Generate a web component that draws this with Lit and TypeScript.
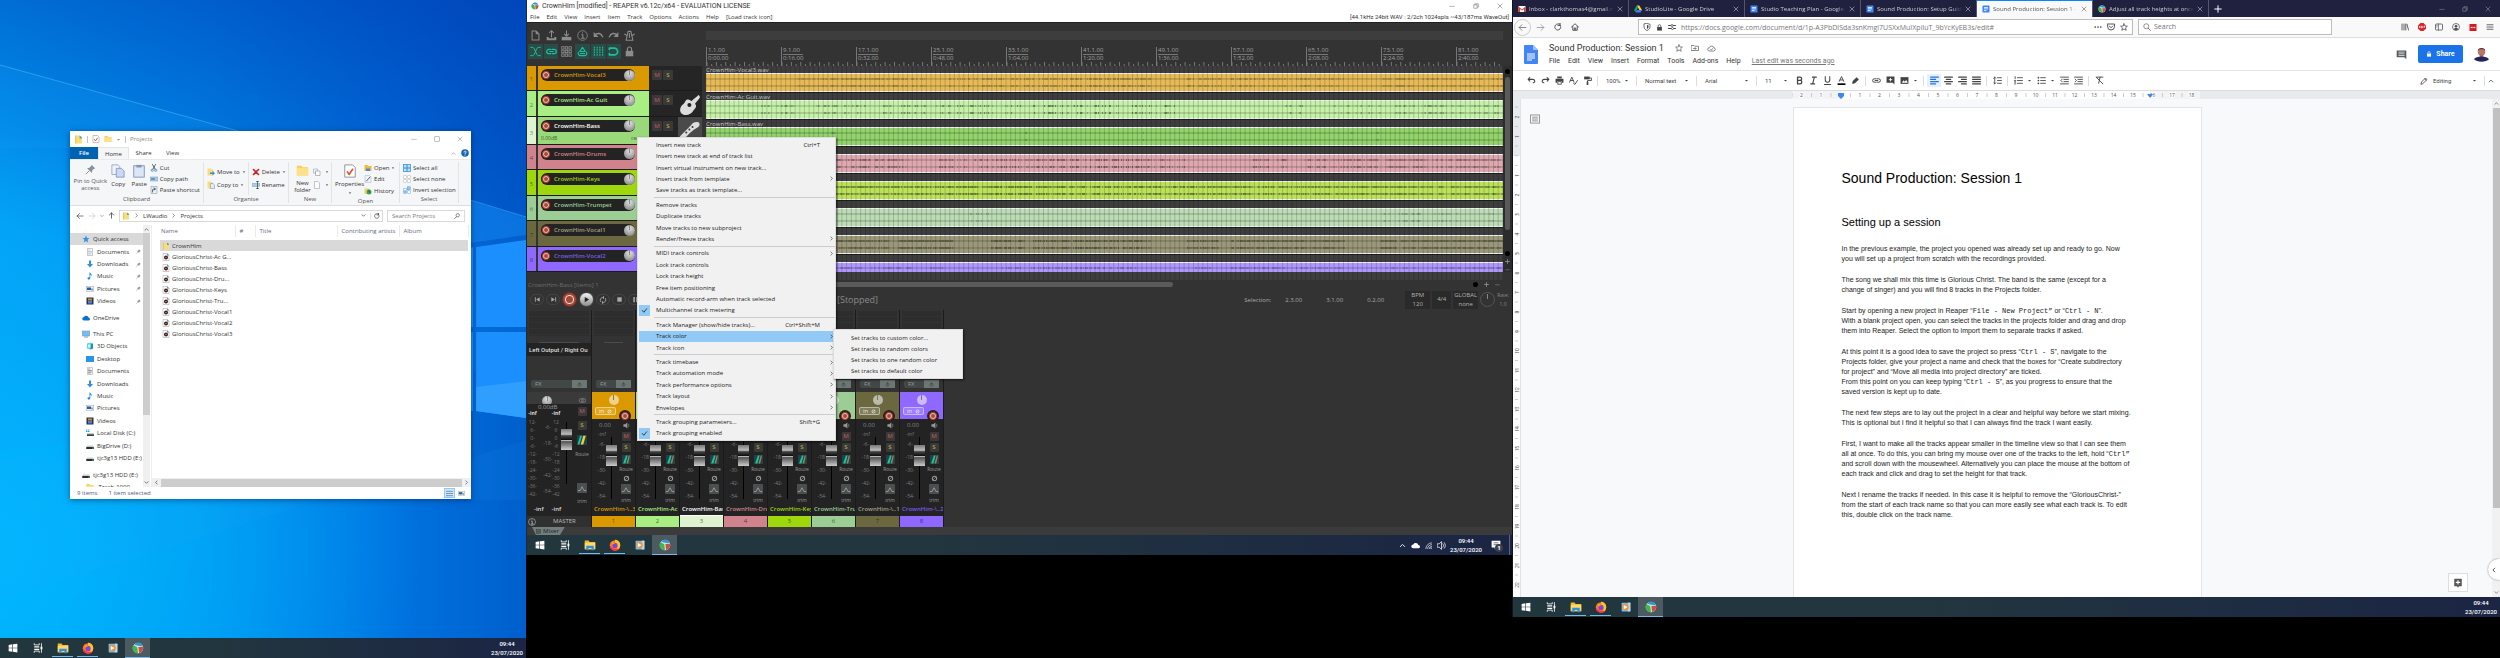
import { LitElement, html, svg, css, nothing } from "lit";
import { customElement, property } from "lit/decorators.js";
import { styleMap } from "lit/directives/style-map.js";
import { classMap } from "lit/directives/class-map.js";

/* ---------- icons, all on a 16 x 16 grid ---------- */
const line = (d: string, w = 1.5) =>
  svg`<path d=${d} fill="none" stroke="currentColor" stroke-width=${w} stroke-linecap="round" stroke-linejoin="round"/>`;
const fill = (d: string, c = "currentColor") => svg`<path d=${d} fill=${c}/>`;

const glyphs: Record<string, unknown> = {
  win: fill("M1 3l6-1v5.600H1zM8 1.900L15 1v6.600H8zM1 8.500h6V14l-6-.9zM8 8.500h7V15l-7-1z"),
  tasks: svg`${fill("M2 5h8v2H2zM2 9h8v2H2z")}${line("M2 1v2h8V1M2 15v-2h8v2M13.500 1v14", 1.300)}${fill("M12 6h3v4h-3z")}`,
  folderTask: svg`${fill("M1 2h5l1.500 2H15v10H1z", "#f5b82e")}${fill("M1 5h14v8H1z", "#ffd86b")}${fill("M3 9h10v6h-3v-3H6v3H3z", "#2f8fe0")}`,
  firefox: svg`<circle cx="8" cy="8.500" r="7" fill="#ff7a1a"/>${fill("M8 1c4 0 7 3 7 7 0 3-2 6-5 7 3-4 1-8-2-9z", "#ffc329")}${fill("M1 8c0 5 4 7.500 7 7.500s5-1 6-3c-5 2-10 1-13-4.500z", "#ff2f5e")}<circle cx="8" cy="8.500" r="3.400" fill="#7a45e0"/>${fill("M3 4c2-1 4 0 5 2-2 0-3 1-3 2z", "#ff9a1f")}`,
  media: svg`<rect x="1" y="1" width="14" height="14" rx="1" fill="#7db9dc"/><rect x="11" y="1" width="4" height="14" fill="#b9d9ea"/><circle cx="7.500" cy="8" r="5" fill="#ff8c2b"/>${fill("M4.500 5h1l5 3-5 3h-1z", "#fff")}`,
  reaper: svg`<circle cx="8" cy="8" r="7" fill="#d8e4e4"/>${fill("M8 1a7 7 0 0 1 6.500 4.500L8 5 3 3.500A7 7 0 0 1 8 1z", "#2c9ad0")}${fill("M2 4l5 3 1 8A7 7 0 0 1 2 4z", "#43b649")}${fill("M8.500 6.500l6.400-.2c.5 4-2 7.700-5.400 8.500z", "#c95048")}`,
  folder: svg`${fill("M2 1h8l4 3v11H2z", "#fbdc7a")}${fill("M10 1l4 3v2h-4z", "#4aa3e0")}${fill("M2 1h2v14H2z", "#f2c54e")}`,
  folderFlat: svg`${fill("M1 2h6l1 2h7v10H1z", "#f7cf5e")}${fill("M1 5h14v9H1z", "#fce08a")}`,
  checkDoc: svg`<path d="M2 1h9l3 3v11H2z" fill="#fff" stroke="#8a8a8a"/>${line("M5 9l2 3 4-6", 1.800)}`,
  audio: svg`<path d="M2 1h9l3 3v11H2z" fill="#fff" stroke="#9a9a9a"/>${fill("M10 1l4 4h-4z", "#3b82d0")}<circle cx="8" cy="9" r="4" fill="#2b1b22"/><circle cx="8" cy="9" r="1.600" fill="#ff7a2a"/>`,
  pin: svg`${fill("M9.500 1l5.500 5.500-2 .5-2.500 2.500-.5 3.500L3 6l3.500-.5L9 3z")}${line("M6 10l-4.500 4.500", 1.400)}`,
  star: svg`${fill("M8 1l2 5 5 .3-4 3.400 1.400 5.300L8 12l-4.400 3L5 9.700 1 6.300 6 6z", "#2f93e6")}`,
  copy: svg`<path d="M1 1h7l2 2v9H1z" fill="#eef3fb" stroke="#9aa7c0"/><path d="M6 5h6l3 3v7H6z" fill="#c9d9f5" stroke="#8798bd"/>`,
  paste: svg`<rect x="2" y="2" width="12" height="13" fill="#dbe7f8" stroke="#7f8fae"/><rect x="5" y="1" width="6" height="3" fill="#8b97ab"/>`,
  cut: svg`${line("M5 1l5 9M11 1L6 10", 1.500)}<circle cx="4.500" cy="12.500" r="2.200" fill="none" stroke="#2f7fc4" stroke-width="1.500"/><circle cx="11.500" cy="12.500" r="2.200" fill="none" stroke="#2f7fc4" stroke-width="1.500"/>`,
  path: svg`<rect x="0" y="4" width="16" height="8" fill="#a9cdea" stroke="#6b9cc4"/>${line("M3 8h6", 1.500)}`,
  shortcut: svg`<rect x="2" y="1" width="12" height="14" fill="#e6eefb" stroke="#7f8fae"/>${line("M5 12V8c0-2 2-2 5-2M8 4l3 2-3 2", 1.400)}`,
  moveTo: svg`${fill("M1 1h7l1 2h4v12H1z", "#fbdc7a")}${fill("M6 9h5V6l5 4.500-5 4.500v-3H6z", "#2f8fe0")}`,
  copyTo: svg`${fill("M1 1h7l1 2h4v12H1z", "#fbdc7a")}<path d="M7 5h5l3 3v7H7z" fill="#e3ecfb" stroke="#6d86b5"/>`,
  del: line("M3 3l10 10M13 3L3 13", 3.200),
  rename: svg`<rect x="0" y="5" width="15" height="6" fill="#a9cdea" stroke="#6b9cc4"/>${line("M9 1h4M11 1v14M9 15h4", 1.300)}`,
  newItem: svg`<path d="M1 2h8v8H1z" fill="#f4f6f9" stroke="#8793a5"/><path d="M5 6h9v9H5z" fill="#fff" stroke="#6f7c90"/>`,
  page: svg`<path d="M3 1h7l3 3v11H3z" fill="#fff" stroke="#8a9098"/>`,
  open: svg`${fill("M1 2h6l1 2h7v10H1z", "#f2b93b")}${fill("M4 9h8v5H4z", "#3b8ee0")}`,
  edit: svg`<path d="M2 1h9l3 3v11H2z" fill="#eef3fb" stroke="#9fb2d0"/>${line("M5 12l7-8", 1.500)}`,
  history: svg`${fill("M1 3h9l2 2v9H1z", "#f0d169")}<circle cx="10" cy="10" r="5" fill="#3aa657"/>${line("M10 7v3l2 1", 1.200)}`,
  selAll: svg`<rect x="1" y="1" width="14" height="14" fill="#bfe0fa" stroke="#2f8fd8" stroke-width="1.500"/>${fill("M7 1h2v14H7zM1 7h14v2H1z", "#2f8fd8")}`,
  selNone: svg`<g fill="#fff" stroke="#b0b0b0"><rect x="1.500" y="1.500" width="5" height="5"/><rect x="9.500" y="1.500" width="5" height="5"/><rect x="1.500" y="9.500" width="5" height="5"/><rect x="9.500" y="9.500" width="5" height="5"/></g>`,
  selInv: svg`<g stroke="#5aa0dc"><rect x="1.500" y="4.500" width="5" height="5" fill="#fff"/><rect x="8.500" y="1.500" width="6" height="6" fill="#8fc4f0"/><rect x="1.500" y="10.500" width="5" height="4" fill="#8fc4f0"/><rect x="9.500" y="9.500" width="5" height="5" fill="#fff"/></g>`,
  left: line("M14 8H2M7 3L2 8l5 5"),
  right: line("M2 8h12M9 3l5 5-5 5"),
  up: line("M8 14V2M3 7l5-5 5 5", 2),
  chevDown: line("M3 5.500l5 5 5-5", 2),
  chevUp: line("M3 10.500l5-5 5 5", 2),
  chevRight: line("M6 3l5 5-5 5", 1.800),
  chevLeft: line("M10 3L5 8l5 5", 2),
  caret: fill("M3 6h10l-5 5z"),
  refresh: line("M12.500 4.500A6 6 0 1 1 8 2h4M12 .8V5H8", 1.700),
  search: svg`<circle cx="10" cy="6" r="4.500" fill="none" stroke="currentColor" stroke-width="1.700"/>${line("M7 9.500L1.500 15", 1.900)}`,
  searchL: svg`<circle cx="6.500" cy="6.500" r="5" fill="none" stroke="currentColor" stroke-width="1.400"/>${line("M10.500 10.500L15 15", 1.700)}`,
  doc: svg`<path d="M3 1h10v14H3z" fill="#fff" stroke="#8a97a8"/>${line("M5 4h3M5 7h6M5 10h6M5 12h4", 1)}`,
  down: fill("M6 1h4v7h4l-6 7-6-7h4z", "#2b8fe2"),
  music: svg`${fill("M7 1h1.600c.4 3 4 4 3.400 8-.6-2-2-3-3.400-3v6.500C8.600 14 7 15 5.500 15S3 14 3 12.800c0-1.600 2-2.600 4-2z", "#1f8be6")}`,
  pics: svg`<rect x="0.500" y="3" width="15" height="10" fill="#eef4f8" stroke="#9aa5b0"/>${fill("M2 5h8v5H2z", "#2d5f8f")}${fill("M10 7h4v4h-4z", "#7fa9c6")}`,
  videos: svg`<rect x="1" y="1" width="14" height="14" fill="#2d3446"/>${fill("M4 3h8v4H4z", "#d58b3a")}${fill("M4 8h8v5H4z", "#4a7fd6")}`,
  cloud: fill("M4 13a3.500 3.500 0 0 1 0-7 5 5 0 0 1 9 1 3 3 0 0 1 0 6z"),
  pc: svg`<rect x="0.500" y="2" width="15" height="10" fill="#6cc0f5" stroke="#88949e"/>${fill("M4 13h8v2H4z", "#8a9aa8")}`,
  cube: svg`${fill("M2 3l7-2 5 2v10l-5 2-7-2z", "#5fd2e0")}${fill("M9 5l5-2v10l-5 2z", "#1796ab")}${fill("M4 5h5v6H4z", "#d9f6fa")}`,
  desk: svg`<rect x="0.500" y="2.500" width="15" height="11" fill="#1f96f2" stroke="#1478cc"/>`,
  drive: svg`${fill("M2 7h12l1.500 3H.5z", "#c7ccd1")}${fill("M.5 10h15v4H.5z", "#2b2f33")}${fill("M12 11.500h2v1.500h-2z", "#39d353")}`,
  driveC: svg`${fill("M0 1h3v2H0zM4 1h3v2H4zM0 4h3v2H0zM4 4h3v2H4z", "#2aa0ea")}${fill("M3 8h12l1 2.500H2z", "#c7ccd1")}${fill("M2 10.500h14V14H2z", "#3b4147")}`,
  details: svg`${line("M1 3h3M1 8h3M1 13h3M6 3h4M6 8h4M6 13h4M12 3h3M12 8h3M12 13h3", 1.500)}`,
  min: line("M2 9h12", 1.300),
  max: svg`<rect x="2" y="2" width="12" height="12" fill="none" stroke="currentColor" stroke-width="1.400"/>`,
  restore: svg`<path d="M2 5h9v9H2zM5 5V2h9v9h-3" fill="none" stroke="currentColor" stroke-width="1.400"/>`,
  close: line("M2.500 2.500l11 11M13.500 2.500l-11 11", 1.500),
  help: svg`<circle cx="8" cy="8" r="7.500" fill="#1266b5"/>${line("M6 6.200c0-3 4.300-2.800 4.300-.2C10.300 7.600 8 8 8 9.500M8 12v.2", 1.700)}`,
  newFile: line("M3 1.500h6l4 4v9H3zM9 1.500v4h4", 1.500),
  openUp: svg`${line("M8 10V1M5 4l3-3 3 3", 1.500)}${fill("M1 10h3v2h8v-2h3v5H1z")}`,
  saveDown: svg`${line("M8 1v7M5 6l3 3 3-3", 1.500)}${fill("M1 10h14v5H1z")}`,
  info: svg`<circle cx="8" cy="8" r="7" fill="none" stroke="currentColor" stroke-width="1.200"/>${line("M7 7h1.500v5M6.500 12h4M8 4v.3", 1.500)}`,
  undo: svg`${line("M3 7c3-3 9-3 11 3", 2)}${fill("M1 3v7h7z")}`,
  redo: svg`${line("M13 7c-3-3-9-3-11 3", 2)}${fill("M15 3v7H8z")}`,
  metro: svg`${line("M6 2h4l3 13H3zM8 5v6M1 6l3 2M15 6l-3 2", 1.600)}`,
  xfade: line("M1 2h3c3 0 5 12 8 12h3M1 14h3c3 0 5-12 8-12h3", 1.400),
  link: line("M7 5H4a3 3 0 0 0 0 6h3M9 5h3a3 3 0 0 1 0 6H9M5.500 8h5", 1.700),
  grid9: svg`<g fill="none" stroke="currentColor" stroke-width="1.200"><rect x="1" y="1" width="3.500" height="3.500"/><rect x="6.200" y="1" width="3.500" height="3.500"/><rect x="11.500" y="1" width="3.500" height="3.500"/><rect x="1" y="6.200" width="3.500" height="3.500"/><rect x="6.200" y="6.200" width="3.500" height="3.500"/><rect x="11.500" y="6.200" width="3.500" height="3.500"/><rect x="1" y="11.500" width="3.500" height="3.500"/><rect x="6.200" y="11.500" width="3.500" height="3.500"/><rect x="11.500" y="11.500" width="3.500" height="3.500"/></g>`,
  env: line("M2 9c-1 3 1 5 3 5h6c2 0 4-2 3-5M4 8l4-6 4 6zM5 11h6", 1.600),
  gridLines: svg`<path d="M2 1v14M6 1v14M10 1v14M14 1v14" stroke="currentColor" stroke-width="1.600" stroke-dasharray="2.500 1"/>`,
  snap: line("M2 3h7a5 5 0 0 1 0 10H2M2 3v2M2 11v2", 2.400),
  lock: svg`${fill("M2.500 7h11v8h-11z")}${line("M5 7V4.500a3 3 0 0 1 6 0V7", 1.700)}`,
  prev: fill("M2 3h2v10H2zM13 3v10L5 8z"),
  next: fill("M12 3h2v10h-2zM3 3v10l8-5z"),
  play: fill("M4 2l10 6-10 6z"),
  loop: line("M3 11a5.500 5.500 0 0 1 6-8M13 5a5.500 5.500 0 0 1-6 8M9 1v4M7 15v-4", 1.700),
  stop: fill("M3 3h10v10H3z"),
  pause: fill("M3 2h3.500v12H3zM9.500 2H13v12H9.500z"),
  check: line("M3 8l3.500 4L13 4", 1.900),
  speaker: svg`${fill("M1 5h4l5-4v14l-5-4H1z")}${line("M12.500 5c1.500 2 1.500 4 0 6", 1.500)}`,
  volume: svg`${line("M1 5h3l4-4v14l-4-4H1zM10.500 5c1.500 2 1.500 4 0 6M13 3c2.500 3 2.500 7 0 10", 1.300)}`,
  wifi: svg`${line("M2 15A13 13 0 0 1 15 2M6 15a9 9 0 0 1 9-9M10 15a5 5 0 0 1 5-5", 1.500)}<circle cx="14" cy="14" r="1.500" fill="currentColor"/>`,
  route: svg`<rect width="16" height="16" fill="#24414a"/>${fill("M2 15L7 1h3L6 15z", "#15c9a4")}${fill("M8 15L12 1h2l-3 14z", "#a08a4a")}`,
  routeM: svg`<rect width="16" height="16" fill="#24414a"/>${fill("M1 15L5 1h3L4 15z", "#15c9a4")}${fill("M6 15L10 1h4l-4 14z", "#e8d33a")}`,
  phase: svg`<circle cx="8" cy="8" r="5" fill="none" stroke="currentColor" stroke-width="2.400"/>${line("M4 12l8-8", 1.500)}`,
  trim: svg`<rect width="16" height="16" rx="1" fill="#4b4f4f"/>${line("M2 12h3l3-6 3 6h3", 1.500)}`,
  mono: svg`<rect width="16" height="16" rx="1" fill="#3d3d3d"/><circle cx="6" cy="8" r="3.500" fill="none" stroke="currentColor"/><circle cx="10" cy="8" r="3.500" fill="none" stroke="currentColor"/>`,
  power: svg`<circle cx="8" cy="9" r="5" fill="none" stroke="currentColor" stroke-width="1.400"/>${line("M8 2v7", 1.400)}`,
  guitar: svg`${fill("M15 0l1 2-4 5c2 2 0 4-1 5-2 4-7 5-9.500 3S0 9 3 7c1-1 1-2 2-3 2-1 3 0 4 1z")}<circle cx="7.500" cy="8" r="1.600" fill="#222"/>${line("M9 6l6-5", 1.200)}`,
  head: svg`${fill("M0 13L9 4c1-2 4-3 6-2 1 1 1 3-1 4-4 2-8 6-11 10H0z")}<g fill="#333"><circle cx="5" cy="10" r=".8"/><circle cx="7.500" cy="7.500" r=".8"/><circle cx="10" cy="5.500" r=".8"/></g>`,
  gmail: svg`<rect x="1" y="2" width="14" height="12" rx="1" fill="#fff"/>${fill("M1 3v11h3V8l4 3 4-3v6h3V3l-7 6z", "#e5382f")}`,
  drv: svg`${fill("M5.500 1h5L16 10h-5z", "#ffcf42")}${fill("M5.500 1L8 5.500 3 14 0 10z", "#11a861")}${fill("M5.500 10H16l-3 5H3z", "#3f7ff0")}`,
  gdoc: svg`<rect x="1" y="1" width="14" height="14" rx="1" fill="#4286f5"/>${fill("M4 4h8v1.500H4zM4 7h8v1.500H4zM4 10h5v1.500H4z", "#fff")}`,
  home: line("M1 8l7-6.500L15 8M3.500 7v7.500h9V7M6.500 14v-4h3v4", 1.700),
  shield: svg`${line("M8 1l6 1.500V8c0 3-3 6-6 7-3-1-6-4-6-7V2.500z", 1.500)}${fill("M8 4v8c2-1 3-3 3-4V5z")}`,
  toggles: svg`${line("M1 5h4M11 5h4M1 11h5M12 11h3", 2)}<circle cx="8" cy="5" r="2" fill="none" stroke="currentColor" stroke-width="1.500"/><circle cx="9" cy="11" r="2" fill="none" stroke="currentColor" stroke-width="1.500"/>`,
  dots: svg`<circle cx="2.500" cy="8" r="1.700" fill="currentColor"/><circle cx="8" cy="8" r="1.700" fill="currentColor"/><circle cx="13.500" cy="8" r="1.700" fill="currentColor"/>`,
  pocket: line("M1 2h14v5a7 7 0 0 1-14 0zM4.500 6L8 9.500 11.500 6", 1.800),
  starO: line("M8 1.500l2 4.500 4.800.4-3.600 3.200 1.200 4.900L8 12l-4.400 2.500 1.200-4.900L1.200 6.400 6 6z", 1.500),
  library: line("M2 2v12M6 2v12M9.500 2v12M12 2.500l3 11.500", 1.700),
  abp: svg`${fill("M5 0h6l5 5v6l-5 5H5l-5-5V5z", "#d8232a")}<path d="M2.500 10l1-4 1 4M7 6v4h1.500V6zM12 10V6h1.500v2H12" fill="none" stroke="#fff" stroke-width="1.200"/>`,
  sidebar: svg`<rect x="1" y="2" width="14" height="12" rx="2" fill="none" stroke="currentColor" stroke-width="1.500"/>${line("M7 2v12M3.500 5h1M3.500 8h1", 1.200)}`,
  account: svg`<circle cx="8" cy="8" r="7" fill="none" stroke="currentColor" stroke-width="1.400"/><circle cx="8" cy="6.500" r="2.500" fill="currentColor"/>${fill("M3.500 12.500c1-3.500 8-3.500 9 0-2 2-7 2-9 0z")}`,
  lastpass: svg`<rect x="1" y="2" width="14" height="14" fill="#d8171f"/><g fill="#fff"><circle cx="4.500" cy="9" r="1.300"/><circle cx="8" cy="9" r="1.300"/><circle cx="11.500" cy="9" r="1.300"/></g>`,
  burger: line("M2 3.500h12M2 8h12M2 12.500h12", 1.600),
  plus: line("M8 1.500v13M1.500 8h13", 2),
  move: line("M1 3h5l1.500 1.500H15V13H1zM5 9h5M8 7l2 2-2 2", 1.500),
  cloudOk: line("M4.500 12.500a3 3 0 0 1-.5-6 4.500 4.500 0 0 1 8.500.5 2.800 2.800 0 0 1 0 5.500zM6 9l1.500 1.500L10.500 8", 1.400),
  uturn: line("M5 3L2 6l3 3M2.500 6H10c5 0 5 6 1 6", 1.900),
  uturnR: line("M11 3l3 3-3 3M13.500 6H6c-5 0-5 6-1 6", 1.900),
  print: svg`${fill("M4 1h8v3H4zM1 5h14v7h-3V9H4v3H1z")}<rect x="5" y="10" width="6" height="4.500" fill="none" stroke="currentColor" stroke-width="1.500"/>`,
  spell: line("M1 11L5 2l4 9M2.500 8h5M8 13l2.500 2L15 8", 1.600),
  paint: svg`${fill("M2 1h10v5H2z")}${line("M12 3.500h3V8H8v3", 1.500)}${fill("M6.500 10h3v6h-3z")}`,
  bold: line("M4.500 2v12h5a3.200 3.200 0 0 0 0-6.300h-5H9A2.800 2.800 0 0 0 9 2z", 2.300),
  italic: line("M6 2h7M3 14h7M9.500 2l-3 12", 2),
  underline: line("M4 1v6a4 4 0 0 0 8 0V1M2.500 15h11", 1.800),
  colorA: svg`${line("M4 9.500L8 1l4 8.500M5.500 7h5", 1.600)}${fill("M1 13h14v3H1z", "#000")}`,
  pen: svg`${fill("M2 14l1-5 7-7 4 4-7 7z")}`,
  pencil: line("M2 14l1-4 8-8 3 3-8 8zM9.500 3.500l3 3", 1.600),
  addCom: svg`${fill("M1 1h14v14l-3-3H1z")}<path d="M8 3.500v6M5 6.500h6" stroke="#fff" stroke-width="1.600"/>`,
  image: svg`${fill("M1 2h14v12H1z")}${fill("M3 12l3.500-4.500 2 2.500L11 7l3 5z", "#fff")}`,
  alL: line("M1 2h14M1 6h9M1 10h14M1 14h9", 1.800),
  alC: line("M1 2h14M4 6h8M1 10h14M4 14h8", 1.800),
  alR: line("M1 2h14M6 6h9M1 10h14M6 14h9", 1.800),
  alJ: line("M1 2h14M1 6h14M1 10h14M1 14h14", 1.800),
  spacing: line("M3 2v12M1 4l2-2 2 2M1 12l2 2 2-2M8 3h7M8 8h7M8 13h7", 1.500),
  ol: line("M2 1v4M1 8h2l-2 3h2M1 14h2M6 3h9M6 8h9M6 13h9", 1.500),
  ul: svg`<circle cx="2.500" cy="3" r="1.500" fill="currentColor"/><circle cx="2.500" cy="8" r="1.500" fill="currentColor"/><circle cx="2.500" cy="13" r="1.500" fill="currentColor"/>${line("M6.500 3H15M6.500 8H15M6.500 13H15", 1.500)}`,
  outdent: line("M1 2h14M7 6h8M7 10h8M1 14h14M4 5.500L1.500 8 4 10.500", 1.600),
  indent: line("M1 2h14M7 6h8M7 10h8M1 14h14M2 5.500L4.500 8 2 10.500", 1.600),
  clear: line("M3 2h11M9 2L6.500 13M2 2l12 12", 1.600),
  outline: svg`<rect x="1" y="1.500" width="14" height="13" fill="none" stroke="currentColor" stroke-width="1.200"/>${line("M4 5h8M4 8h8M4 11h8", 1.200)}`,
  comment: svg`${fill("M1 2h14v13l-3-3H1z")}<path d="M3.500 4.500h9M3.500 7h9M3.500 9.500h9" stroke="#fff"/>`,
  notify: svg`${fill("M1 1h14v11H9l-3 3v-3H1z")}<path d="M4 4.500h8M4 7.500h8" stroke="#1b2644"/>`,
  person: svg`<circle cx="8" cy="5" r="4" fill="#b87768"/>${fill("M4 4c0-4 8-4 8 0-2-2-6-2-8 0z", "#5a3b33")}${fill("M6 8h4v3H6z", "#a86a5e")}${fill("M0 13c2-4 14-4 16 0-3 3.500-13 3.500-16 0z", "#24235c")}`,
  explore: svg`${fill("M2 1h12v12H9.500L8 15.500 6.500 13H2z")}<path d="M8 3.500v7M4.500 7h7" stroke="#fff" stroke-width="1.800"/>`,
};

const icon = (name: string, size = 8) =>
  html`<svg class="i i-${name}" width=${size} height=${size} viewBox="0 0 16 16" aria-hidden="true">${glyphs[name]}</svg>`;

const base = css`
  :host { display: block; font: 6px/8px "Open Sans", "Noto Sans", sans-serif; color: #222; }
  * { box-sizing: border-box; }
  button, input, select { font: inherit; color: inherit; background: none; border: 0; padding: 0; margin: 0; outline: 0; text-align: left; }
  a { color: inherit; text-decoration: none; }
  ul { list-style: none; margin: 0; padding: 0; }
  .i { display: block; flex: none; }
  .grow { flex: 1; }
`;

/* ---------- taskbar ---------- */
@customElement("task-bar")
class TaskBar extends LitElement {
  @property({ type: Boolean }) tray = false;

  static styles = [base, css`
    .bar { display: flex; height: 20px; background: linear-gradient(90deg, #21363d, #22363f 40%, #1b2544); color: #fff; align-items: stretch; }
    .app { width: 25px; display: flex; align-items: center; justify-content: center; border-bottom: 1px solid transparent; }
    .open { background: linear-gradient(#76b9ed, #76b9ed) bottom / 21px 1px no-repeat; }
    .active { background: #4b5b61; border-bottom-color: #76b9ed; }
    .tray { display: flex; align-items: center; gap: 5px; padding-right: 4px; }
    .clock { display: grid; text-align: center; line-height: 9px; align-content: center; padding-right: 3px; font-family: Roboto, sans-serif; font-weight: 500; }
    .note { display: flex; align-items: center; padding: 0 8px 0 6px; border-right: 1px solid #5b6478; margin-right: 2px; position: relative; }
    .badge { position: absolute; left: 10px; top: 9px; width: 8px; height: 8px; border-radius: 4px; background: #3b3f4a; text-align: center; font-weight: 700; }
  `];

  render() {
    const apps: [string, string, string][] = [
      ["win", "Start", ""], ["tasks", "Task view", ""], ["folderTask", "File Explorer", "open"],
      ["firefox", "Firefox", "open"], ["media", "Media player", ""], ["reaper", "REAPER", "active"],
    ];
    return html`<nav class="bar">
      ${apps.map(([i, label, c]) => html`<button class="app ${c}" aria-label=${label}>${icon(i, i === "win" || i === "tasks" || i === "media" ? 10 : 12)}</button>`)}
      <span class="grow"></span>
      ${this.tray ? html`<span class="tray">${icon("chevUp", 7)}${icon("cloud", 9)}${icon("wifi", 7)}${icon("volume", 9)}</span>` : nothing}
      <time class="clock"><span>09:44</span><span>23/07/2020</span></time>
      ${this.tray ? html`<button class="note" aria-label="Notifications">${icon("notify", 10)}<span class="badge">1</span></button>` : nothing}
    </nav>`;
  }
}

/* ---------- first screen: desktop with file explorer ---------- */
@customElement("explorer-screen")
class ExplorerScreen extends LitElement {
  static styles = [base, css`
    :host { display: flex; flex-direction: column; min-height: 100vh; position: relative; }
    .desk { flex: 1; position: relative; overflow: hidden; background:
      radial-gradient(ellipse 420px 420px at 0% 86%, rgba(0,186,255,.9), rgba(0,180,255,0)),
      linear-gradient(192deg, rgba(0,62,180,.75), rgba(0,80,200,0) 45%),
      linear-gradient(90deg, #009ff5 0%, #008fee 40%, #0073e0 75%, #005fcc 100%); }
    .beams { position: absolute; inset: 0; width: 100%; height: 100%; }
    .win { position: absolute; left: 70px; top: 131px; width: 401px; background: #fff; box-shadow: 0 1px 6px rgba(0,20,70,.5); display: flex; flex-direction: column; color: #333; }
    .title { display: flex; align-items: center; height: 16px; padding: 0 8px 0 4px; gap: 4px; color: #888; }
    .title .i-checkDoc { color: #e2502b; }
    .sep { width: 1px; height: 7px; background: #c4c4c4; }
    .title .gap { flex: 1; }
    .ctl { display: flex; gap: 17px; }
    .tabs { display: flex; height: 12px; align-items: stretch; line-height: 12px; padding-right: 2px; }
    .tabs button { width: 29px; text-align: center; }
    .tabs .file { background: #0063b1; color: #fff; width: 28px; font-weight: 600; }
    .tabs .home { background: #f5f6f7; border: 1px solid #e3e4e6; border-bottom: 0; line-height: 10px; width: 31px; }
    .tabs .end { display: flex; align-items: center; gap: 5px; color: #fff; }
    .tabs .end .i-chevUp { color: #888; }
    .ribbon { display: flex; height: 47px; background: #f5f6f7; border-top: 1px solid #e9eaec; border-bottom: 1px solid #dcdde0; padding: 2px 0; }
    .group { display: flex; flex-direction: column; border-right: 1px solid #e2e3e5; width: 85px; padding: 0 3px; }
    .group.clip { width: 134px; }
    .group.new { width: 43px; }
    .group.opn { width: 68px; }
    .group.sel { width: 59px; }
    .body { flex: 1; display: flex; }
    .cap { text-align: center; line-height: 8px; color: #555; }
    .big { display: flex; flex-direction: column; align-items: center; text-align: center; line-height: 7px; gap: 1px; min-width: 21px; }
    .big.pin { width: 36px; color: #555; }
    .big .i { margin: 2px 0; }
    .opn .i-checkDoc { color: #e2502b; }
    .pin .i { color: #87919c; }
    .rows { display: flex; flex-direction: column; justify-content: space-around; flex: 1; white-space: nowrap; }
    .rows.two { padding: 3px 0 4px; }
    .rows button { display: flex; align-items: center; gap: 2px; }
    .org .rows + .rows { border-left: 1px solid #e2e3e5; padding-left: 3px; }
    .org .rows { flex: none; }
    .org .body { gap: 2px; }
    .i-del { color: #d11f1f; }
    .addr { display: flex; align-items: center; height: 19px; padding: 0 6px; gap: 4px; color: #555; }
    .addr .off { opacity: .3; }
    .crumbs { flex: 1; height: 12px; border: 1px solid #d9d9d9; display: flex; align-items: center; gap: 4px; padding: 0 2px; color: #333; }
    .crumbs .rf { border-left: 1px solid #e2e2e2; padding-left: 3px; }
    .find { width: 78px; height: 12px; border: 1px solid #d9d9d9; display: flex; align-items: center; padding: 0 4px; }
    .find input { width: 62px; }
    .find input::placeholder { color: #777; opacity: 1; }
    .main { display: flex; height: 262px; }
    .nav { width: 73px; padding-top: 8px; overflow: hidden; }
    .nav ul { display: flex; flex-direction: column; min-height: 260px; }
    .nav li { flex: 1; display: flex; align-items: center; padding-left: 16px; white-space: nowrap; }
    .nav li.root { padding-left: 12px; }
    .nav li.brk { margin-top: 4px; }
    .nav li.on { background: #d9d9d9; }
    .nav a { display: flex; align-items: center; gap: 3px; flex: 1; }
    .nav .p { color: #9aa1a8; margin-right: 2px; }
    .nav .i-cloud { color: #0a72c8; }
    .vbar { width: 7px; background: #f0f0f0; display: flex; flex-direction: column; align-items: center; padding: 2px 0; margin-right: 1px; gap: 1px; }
    .vbar .thumb { width: 7px; height: 182px; background: #cdcdcd; }
    .list { flex: 1; border-left: 1px solid #eee; display: flex; flex-direction: column; padding-left: 8px; }
    table { border-collapse: collapse; table-layout: fixed; width: 308px; }
    th { font-weight: 400; text-align: left; padding: 0 0 0 4px; height: 12px; border-right: 1px solid #eaeaea; color: #5f6b85; }
    th:first-child { padding-left: 1px; }
    td { height: 11px; padding: 0; line-height: 10px; }
    tr.first td { height: 14px; padding-top: 3px; background: linear-gradient(#d9d9d9, #d9d9d9) bottom / 100% 11px no-repeat; }
    .cell { display: flex; align-items: center; gap: 2px; padding-left: 2px; white-space: nowrap; }
    .hbar { display: flex; align-items: center; gap: 2px; height: 9px; background: #f0f0f0; margin-left: -8px; padding: 0 2px; }
    .hbar .thumb { flex: 1; height: 8px; background: #cdcdcd; }
    .status { display: flex; height: 12px; align-items: center; gap: 11px; padding: 0 4px 0 7px; color: #4a5a78; }
    .views { display: flex; gap: 1px; }
    .views span { width: 11px; height: 10px; display: grid; place-items: center; }
    .views .on { background: #cce8ff; border: 1px solid #90c8f6; }
  `];

  render() {
    const nav: [string, string, string][] = [
      ["star", "Quick access", "root on"], ["doc", "Documents", "pin"], ["down", "Downloads", "pin"], ["music", "Music", "pin"],
      ["pics", "Pictures", "pin"], ["videos", "Videos", "pin"], ["cloud", "OneDrive", "root brk"], ["pc", "This PC", "root brk"],
      ["cube", "3D Objects", ""], ["desk", "Desktop", ""], ["doc", "Documents", ""], ["down", "Downloads", ""], ["music", "Music", ""],
      ["pics", "Pictures", ""], ["videos", "Videos", ""], ["driveC", "Local Disk (C:)", ""], ["drive", "BigDrive (D:)", ""],
      ["drive", "tjc3g13 HDD (E:)", ""], ["drive", "tjc3g13 HDD (E:)", "root brk"], ["folderFlat", ".Trash-1000", ""],
    ];
    const files = ["Ac G...", "Bass", "Dru...", "Keys", "Tru...", "Vocal1", "Vocal2", "Vocal3"];
    const row = (i: string, t: string, more = false) => html`<button>${icon(i, 8)}<span>${t}</span>${more ? icon("caret", 4) : nothing}</button>`;
    return html`
      <div class="desk">
        <svg class="beams" viewBox="0 0 527 638" preserveAspectRatio="none" aria-hidden="true">
          <path d="M0 65L300 148H0z" fill="#19a4ff" opacity=".16"/>
          <path d="M0 65L300 148" stroke="#5cc4ff" stroke-width="1" opacity=".45"/>
          <path d="M0 450L200 430L527 360V220L300 140H0z" fill="#1c9bff" opacity=".10"/>
          <path d="M471 200L527 217" stroke="#3fb0ff" opacity=".6"/>
          <path d="M471 200L527 217V235L471 243z" fill="#1288f4" opacity=".5"/>
          <path d="M0 598Q200 540 320 500H527V440L471 458H0z" fill="#2ea4ff" opacity=".08"/>
          <path d="M471 248L474 247V327H471zM477 247L527 240V327H477zM477 332H527V418L477 411zM471 332H474V411H471z" fill="#1c8fff"/>
          <path d="M477 387L527 381V418L477 411z" fill="#2f9eff"/>
        </svg>
        <section class="win">
          <header class="title">
            ${icon("folder", 9)}<span class="sep"></span>${icon("checkDoc", 8)}${icon("folderFlat", 8)}${icon("caret", 5)}<span class="sep"></span><span>Projects</span>
            <span class="gap"></span><span class="ctl">${icon("min", 6)}${icon("max", 6)}${icon("close", 6)}</span>
          </header>
          <div class="tabs"><button class="file">File</button><button class="home">Home</button><button>Share</button><button>View</button><span class="grow"></span><span class="end">${icon("chevUp", 5)}${icon("help", 8)}</span></div>
          <div class="ribbon">
            <div class="group clip"><div class="body">
              <button class="big pin">${icon("pin", 11)}<span>Pin to Quick access</span></button>
              <button class="big">${icon("copy", 14)}<span>Copy</span></button>
              <button class="big">${icon("paste", 14)}<span>Paste</span></button>
              <div class="rows">${row("cut", "Cut")}${row("path", "Copy path")}${row("shortcut", "Paste shortcut")}</div>
            </div><span class="cap">Clipboard</span></div>
            <div class="group org"><div class="body">
              <div class="rows two">${row("moveTo", "Move to", true)}${row("copyTo", "Copy to", true)}</div>
              <div class="rows two">${row("del", "Delete", true)}${row("rename", "Rename")}</div>
            </div><span class="cap">Organise</span></div>
            <div class="group new"><div class="body">
              <button class="big">${icon("folderFlat", 13)}<span>New folder</span></button>
              <div class="rows two">${row("newItem", "", true)}${row("page", "", true)}</div>
            </div><span class="cap">New</span></div>
            <div class="group opn"><div class="body">
              <button class="big">${icon("checkDoc", 14)}<span>Properties</span>${icon("caret", 4)}</button>
              <div class="rows">${row("open", "Open", true)}${row("edit", "Edit")}${row("history", "History")}</div>
            </div><span class="cap">Open</span></div>
            <div class="group sel"><div class="body">
              <div class="rows">${row("selAll", "Select all")}${row("selNone", "Select none")}${row("selInv", "Invert selection")}</div>
            </div><span class="cap">Select</span></div>
          </div>
          <div class="addr">
            ${icon("left", 8)}<span class="off">${icon("right", 8)}</span>${icon("chevDown", 4)}${icon("up", 7)}
            <div class="crumbs">${icon("folder", 8)}${icon("chevRight", 5)}<a href="#">LWaudio</a>${icon("chevRight", 5)}<a href="#">Projects</a><span class="grow"></span>${icon("chevDown", 5)}<span class="rf">${icon("refresh", 6)}</span></div>
            <label class="find"><input placeholder="Search Projects" aria-label="Search Projects">${icon("search", 6)}</label>
          </div>
          <div class="main">
            <nav class="nav"><ul>${nav.map(([i, t, c]) => html`<li class=${c}><a href="#">${icon(i, 8)}<span>${t}</span></a>${c === "pin" ? html`<span class="p">${icon("pin", 5)}</span>` : nothing}</li>`)}</ul></nav>
            <div class="vbar">${icon("chevUp", 5)}<span class="thumb"></span><span class="grow"></span>${icon("chevDown", 5)}</div>
            <div class="list">
              <table>
                <colgroup><col width="75"><col width="20"><col width="82"><col width="62"><col width="69"></colgroup>
                <thead><tr><th>Name</th><th>#</th><th>Title</th><th>Contributing artists</th><th>Album</th></tr></thead>
                <tbody>
                  <tr class="first"><td colspan="5"><span class="cell">${icon("folder", 8)}CrownHim</span></td></tr>
                  ${files.map((f) => html`<tr><td colspan="5"><span class="cell">${icon("audio", 8)}GloriousChrist-${f}</span></td></tr>`)}
                </tbody>
              </table>
              <span class="grow"></span>
              <div class="hbar">${icon("chevLeft", 5)}<span class="thumb"></span>${icon("chevRight", 5)}</div>
            </div>
          </div>
          <footer class="status"><span>9 items</span><span>1 item selected</span><span class="grow"></span><span class="views"><span class="on">${icon("details", 7)}</span><span>${icon("pics", 7)}</span></span></footer>
        </section>
      </div>
      <task-bar></task-bar>`;
  }
}

/* ---------- second screen: REAPER ---------- */
interface Track {
  name: string; strip: string; color: string; item: string; num: string; ink: string;
  takes: [number, number][]; density: number; amp: number; wav?: string; pic?: string; selected?: boolean;
}

const tracks: Track[] = [
  { name: "Vocal3", strip: "..3", num: "#db9900", color: "#db9900", item: "#e6bb57", ink: "#db9900", takes: [[92, 222], [240, 446], [482, 516], [526, 640], [677, 709], [716, 798]], density: 0.5, amp: 1, wav: "CrownHim-Vocal3.wav" },
  { name: "Ac Guit", strip: "", num: "#a8ee82", color: "#a8ee82", item: "#c5f2a8", ink: "#a8ee82", takes: [[53, 90], [108, 160], [176, 317], [326, 414], [426, 474], [581, 600], [629, 794]], density: 0.3, amp: 2, wav: "CrownHim-Ac Guit.wav", pic: "guitar" },
  { name: "Bass", strip: "", num: "#def3d0", color: "#9ad97a", item: "#92d36c", ink: "#ffffff", takes: [[126, 130], [320, 322], [438, 440], [646, 648], [672, 674], [748, 750]], density: 0.9, amp: 1, wav: "CrownHim-Bass.wav", pic: "head", selected: true },
  { name: "Drums", strip: "", num: "#d0838c", color: "#d0838c", item: "#dfa8b0", ink: "#d0838c", takes: [[129, 204], [234, 482], [547, 582], [600, 798]], density: 0.6, amp: 2 },
  { name: "Keys", strip: "", num: "#9ed80c", color: "#9ed80c", item: "#bce25a", ink: "#9ed80c", takes: [[129, 550], [553, 798]], density: 0.75, amp: 2 },
  { name: "Trumpet", strip: "", num: "#9bcd94", color: "#9bcd94", item: "#bbdcb4", ink: "#9bcd94", takes: [[262, 284], [676, 688], [694, 716], [728, 760], [784, 790]], density: 0.4, amp: 1 },
  { name: "Vocal1", strip: "..1", num: "#6b6840", color: "#6b6840", item: "#9b9879", ink: "#a5a184", takes: [[129, 184], [192, 248], [286, 320], [328, 366], [368, 446], [482, 514], [526, 640], [676, 692], [696, 798]], density: 0.95, amp: 2 },
  { name: "Vocal2", strip: "..2", num: "#8e68ff", color: "#8e68ff", item: "#b097ff", ink: "#7c5bea", takes: [[129, 158], [166, 210], [222, 240], [294, 316], [326, 366], [370, 436], [490, 508], [526, 640], [682, 712], [730, 798]], density: 0.5, amp: 1 },
];

const wave = (t: Track, seed: number) => {
  let s = seed * 7919 + 17;
  const rnd = () => ((s = (s * 1103515245 + 12345) % 2147483648) / 2147483648);
  let d = "";
  for (const [a, b] of t.takes)
    for (let x = a; x < b; x += 1)
      if (rnd() < t.density) {
        const h = 1 + Math.floor(rnd() * t.amp);
        d += `M${x} ${5 - h / 2}v${h}`;
        if (rnd() < 0.85) d += `M${x} ${12 - h / 2}v${h}`;
      }
  return d;
};

@customElement("reaper-screen")
class ReaperScreen extends LitElement {
  static styles = [base, css`
    :host { position: relative; background: #333; color: #999; border-left: 1px solid #1a2c3a; }
    .head { background: #fff; color: #333; height: 22px; }
    .head > div { display: flex; align-items: center; height: 11px; padding: 1px 9px 0 4px; gap: 3px; }
    .head .name { font: 7px/9px Roboto, sans-serif; }
    .head .menu { gap: 7px; padding: 0 3px 0 3px; }
    .head .audio { font-family: Roboto, sans-serif; }
    .ctl { display: flex; gap: 18px; color: #666; }
    .top { display: grid; grid-template-columns: 179px 1fr; border-top: 1px solid #222; padding-right: 9px; height: 44px; }
    .tools { display: grid; grid-template-columns: repeat(7, 1fr); width: 109px; margin: 5px 0 0 1px; gap: 1px; grid-auto-rows: 15px; }
    .tools button { display: grid; place-items: center; color: #8c8c8c; }
    .tools .on { background: #2a4c47; color: #1fbf9d; }
    .time { overflow: hidden; padding-top: 8px; }
    .band { height: 9px; background: #3d3d3d; }
    .ruler { display: flex; margin-top: 7px; }
    .mark { flex: 0 0 75px; border-left: 1px solid #777; height: 19px; padding-left: 1px; color: #a0a0a0; line-height: 7px; position: relative; }
    .mark span { display: block; width: 20px; }
    .mark span:first-of-type { border-bottom: 1px solid #777; }
    .mark svg { position: absolute; left: 0; bottom: 0; }
    .mid { display: grid; grid-template-columns: 179px 1fr 9px; }
    .tcp { display: grid; grid-template-rows: repeat(8, 1fr); height: 206px; padding-right: 4px; }
    .trk { display: grid; grid-template-columns: 9px 111px 1fr; column-gap: 2px; border-bottom: 1px solid #1b1b1b; }
    .trk .no { display: grid; place-items: end center; padding-bottom: 7px; color: rgba(0,0,0,.5); }
    .panel { padding: 3px; }
    .pill { display: flex; align-items: center; height: 12px; background: #232323; border-radius: 6px; width: 94px; gap: 3px; font-weight: 600; }
    .pill .nm { flex: 1; white-space: nowrap; }
    .rec { width: 10px; height: 10px; border-radius: 5px; background: #a8483a; border: 1px solid #3a1a14; display: grid; place-items: center; flex: none; }
    .rec::after { content: ""; width: 4px; height: 4px; border-radius: 3px; border: 1px solid #e8c0b6; }
    .knob { width: 11px; height: 11px; border-radius: 6px; background: radial-gradient(circle at 50% 30%, #e2e2e2, #777); position: relative; flex: none; }
    .knob::after { content: ""; position: absolute; left: 5px; top: 0; width: 1px; height: 5px; background: #888; }
    .vals { display: flex; justify-content: space-between; font-size: 5px; line-height: 6px; padding: 3px 0 0; color: #3d5c30; }
    .side { background: #252525; display: flex; padding: 4px 3px 0; gap: 1px; margin-left: -2px; }
    .side .pic { margin: -2px -3px 0 auto; color: #ddd; width: 24px; display: grid; place-items: center; }
    .side .pic.sel { background: #4a4a4a; margin-top: -4px; }
    .ms { width: 10px; height: 10px; background: #393939; border-radius: 1px; text-align: center; line-height: 10px; color: #b05050; font-weight: 600; }
    .ms.s { color: #b9ab42; }
    .arr { display: grid; grid-template-rows: repeat(8, 1fr); height: 206px; background: #3e3e3e; overflow: hidden; }
    .lane { display: grid; grid-template-rows: 7px 1fr; border-bottom: 1px solid #1c1c1c; position: relative; }
    .lane .wav { color: #ccc; line-height: 8px; height: 7px; }
    .clip { border: solid #f1f1f1; border-width: 1px 0; display: block; }
    .clip svg { display: block; width: 100%; height: 100%; }
    .gridv { position: absolute; inset: 0; width: 100%; height: 100%; }
    .vs { background: #2c2c2c; display: flex; flex-direction: column; align-items: center; color: #aaa; gap: 3px; }
    .vs .th { width: 5px; flex: 1; margin-bottom: 18px; border-radius: 3px; background: #5a5a5a; }
    .dot { width: 5px; height: 5px; border-radius: 3px; background: #000; }
    .low { margin-left: 179px; margin-right: 9px; height: 8px; background: #3e3e3e; position: relative; }
    .hs { display: flex; align-items: center; height: 9px; padding: 0 12px 0 1px; color: #aaa; gap: 6px; }
    .hs .lab { width: 172px; color: #6d6d6d; }
    .hs .th { flex: 0 0 48%; height: 5px; border-radius: 3px; background: #5a5a5a; }
    .trans { display: flex; align-items: center; height: 21px; padding: 0 3px; gap: 2px; color: #bbb; }
    .tb { width: 14px; height: 11px; border-radius: 6px; border: 1px solid #454545; display: grid; place-items: center; color: #aaa; flex: none; }
    .tb.r, .tb.p { width: 15px; height: 15px; border-radius: 8px; }
    .tb.r { background: #a44838; border-color: #6b2c22; }
    .tb.r::after { content: ""; width: 7px; height: 7px; border: 1px solid #f7dcd4; border-radius: 4px; }
    .tb.p { background: linear-gradient(#f2f2f2, #8d8d8d); color: #222; }
    .state { font-size: 9px; color: #8a8a8a; margin-left: 193px; }
    .sel { display: flex; gap: 13px; color: #aaa; margin-right: 8px; }
    .sel span { min-width: 28px; }
    .box { background: #2a2a2a; height: 18px; display: grid; place-items: center; align-content: center; line-height: 9px; color: #b0b0b0; width: 25px; }
    .box.sm { width: 19px; }
    .dial { width: 15px; height: 15px; border: 1px solid #555; border-radius: 8px; background: linear-gradient(#888, #888) center 1px / 1px 5px no-repeat; }
    .rate { line-height: 9px; color: #888; text-align: center; font-size: 5px; }
    .mixer { display: flex; height: 217px; }
    .strip { width: 44px; display: grid; grid-template-rows: 32px 33px 17px 27px 84px 13px 11px; position: relative; border-right: 1px solid #1b1b1b; }
    .slots { background: repeating-linear-gradient(#2d2d2d 0 5px, #323232 5px 6px); margin: 1px 2px 6px; height: 25px; }
    .rule { border-top: 1px solid #4b4b4b; margin: 0 12px; }
    .io { white-space: nowrap; }
    .io b { display: block; color: #ddd; padding: 3px 2px; font: 500 6px/7px Roboto, sans-serif; background: #232323; }
    .fx { display: flex; align-items: center; justify-content: space-between; margin: 5px 4px 4px; background: #424747; border-radius: 2px; padding-left: 4px; }
    .fx span { color: #9e9e9e; }
    .fx em { background: #6b7774; width: 15px; height: 8px; display: grid; place-items: center; color: #333; }
    .hd { position: relative; padding: 3px; }
    .hd .k { width: 10px; height: 10px; border-radius: 5px; margin: 0 auto 2px; background: linear-gradient(#777, #777) center 0 / 1px 5px no-repeat, rgba(255,255,255,.55); }
    .hd .in { display: flex; align-items: center; justify-content: center; gap: 3px; width: 21px; height: 8px; border: 1px solid rgba(255,255,255,.45); color: rgba(255,255,255,.8); background: rgba(255,255,255,.15); line-height: 6px; border-radius: 2px; }
    .hd .rec { position: absolute; right: 5px; bottom: -2px; box-shadow: 0 0 0 1px #232323; z-index: 1; }
    .fd { background: #232323; display: grid; grid-template-columns: 14px 11px 1fr; position: relative; color: #777; font-size: 5px; line-height: 6px; }
    .sc { display: grid; grid-template-rows: 12px 6px repeat(5, 13px); align-items: center; justify-items: center; color: #7c7c7c; }
    .sc .v { justify-self: start; padding-left: 7px; font-size: 6px; width: 20px; color: #888; }
    input[type="range"] { appearance: none; writing-mode: vertical-lr; direction: rtl; width: 11px; height: 62px; margin-top: 18px; background: linear-gradient(#000, #000) center / 1px 100% no-repeat; }
    input[type="range"]::-webkit-slider-thumb { appearance: none; width: 11px; height: 21px; background: linear-gradient(#777, #bdbdbd 25%, #444 32%, #111 50%, #e8e8e8 52%, #555 60%, #ccc); }
    .bt { display: flex; flex-direction: column; align-items: center; justify-content: space-between; color: #999; padding: 3px 0 0; }
    .bt .ms { width: 9px; height: 9px; line-height: 9px; font-size: 6px; }
    .tn { background: #232323; font-weight: 600; padding: 2px; white-space: nowrap; overflow: hidden; }
    .tn.hot { border-bottom: 1px solid #fff; }
    .nn { text-align: center; line-height: 11px; color: rgba(0,0,0,.6); }
    .master { width: 65px; }
    .master .hd { background: #3a3a3a; display: flex; justify-content: space-between; padding: 4px 4px 0 15px; margin-bottom: 15px; }
    .master .knob { width: 10px; height: 10px; }
    .master .fd { grid-row: 5; margin-top: -15px; grid-template-columns: 11px 13px 10px 12px 1fr; height: 99px; }
    .master .fd .c { display: grid; grid-template-rows: 14px repeat(10, 8px); justify-items: center; align-items: center; }
    .master .fd .c.m { grid-template-rows: 20px repeat(5, 16px); align-items: start; }
    .master .fd .c.m .db { white-space: nowrap; font-size: 6px; color: #999; }
    .master .bt { padding-top: 3px; }
    .master .inf { color: #ddd; font-weight: 700; padding-top: 4px; }
    .master .tn { display: flex; gap: 8px; padding: 2px 7px; color: #ddd; }
    .master .nn { display: flex; align-items: center; gap: 17px; color: #bbb; background: #303030; padding-left: 1px; }
    .tabrow { height: 8px; background: #3b3b3b; padding-left: 5px; }
    .tabrow button { display: flex; gap: 2px; align-items: center; background: #727d7d; color: #222; padding: 0 6px 0 4px; clip-path: polygon(0 0, 100% 0, 85% 100%, 12% 100%); height: 8px; }
    .pop { position: absolute; background: #f1f1f1; color: #222; box-shadow: 1px 1px 2px rgba(0,0,0,.6); display: flex; flex-direction: column; border: 1px solid #ddd; z-index: 2; }
    .ctx { left: 110px; top: 137px; width: 199px; min-height: 304px; padding: 1px; }
    .ctx hr { border: 0; border-top: 1px solid #ccc; margin: 1px 0 1px 15px; width: 181px; }
    .pop button { flex: 1; display: grid; grid-template-columns: 11px 1fr auto 8px; column-gap: 6px; align-items: center; min-height: 11px; }
    .pop .ck { align-self: stretch; display: grid; place-items: center; }
    .pop .ck.y { background: #91c9f7; }
    .pop button > svg { justify-self: end; }
    .pop .hot { background: #91c9f7; }
    .subm { left: 306px; top: 329px; width: 130px; min-height: 49px; padding: 2px 0; }
    .subm button { grid-template-columns: 11px 1fr; }
  `];

  private gridSvg() {
    const xs = Array.from({ length: 172 }, (_, k) => (k * 75) / 16);
    return html`<svg class="gridv" aria-hidden="true"><path d=${xs.map((x) => `M${x.toFixed(1)} 0V210`).join("")} stroke="#000" stroke-width=".8" opacity=".22"/></svg>`;
  }

  private ctxMenu() {
    const items: ([string, string?] | null)[] = [
      ["Insert new track", "Ctrl+T"], ["Insert new track at end of track list"], ["Insert virtual instrument on new track..."], ["Insert track from template", ">"], ["Save tracks as track template..."], null,
      ["Remove tracks"], ["Duplicate tracks"], ["Move tracks to new subproject"], ["Render/freeze tracks", ">"], null,
      ["MIDI track controls", ">"], ["Lock track controls"], ["Lock track height"], ["Free item positioning"], ["Automatic record-arm when track selected"], ["Multichannel track metering", "y"], null,
      ["Track Manager (show/hide tracks)...", "Ctrl+Shift+M"], ["Track color", ">"], ["Track icon", ">"], null,
      ["Track timebase", ">"], ["Track automation mode", ">"], ["Track performance options", ">"], ["Track layout", ">"], ["Envelopes", ">"], null,
      ["Track grouping parameters...", "Shift+G"], ["Track grouping enabled", "y"],
    ];
    return html`<div class="pop ctx" role="menu">${items.map((it) => it === null ? html`<hr>` : html`
      <button role="menuitem" class=${classMap({ hot: it[0] === "Track color" })}>
        <span class="ck ${it[1] === "y" ? "y" : ""}">${it[1] === "y" ? icon("check", 7) : nothing}</span><span>${it[0]}</span>
        <span>${it[1] && it[1].length > 1 ? it[1] : nothing}</span>${it[1] === ">" ? icon("chevRight", 5) : nothing}
      </button>`)}</div>
      <div class="pop subm" role="menu">${["Set tracks to custom color...", "Set tracks to random colors", "Set tracks to one random color", "Set tracks to default color"].map((t) => html`<button role="menuitem"><span></span><span>${t}</span></button>`)}</div>`;
  }

  private strip(t: Track, i: number) {
    const bg = styleMap({ background: t.color });
    return html`<div class="strip">
      <div><div class="slots"></div></div>
      <div class="rule"></div>
      <div class="fx"><span>FX</span><em>${icon("power", 5)}</em></div>
      <div class="hd" style=${bg}><div class="k"></div><button class="in">in ${icon("phase", 5)}</button><button class="rec" aria-label="Record arm"></button></div>
      <div class="fd">
        <div class="sc"><span class="v">0.00</span><span>-inf</span>${[6, 18, 30, 42, 54].map((n) => html`<span>-${n}-</span>`)}</div>
        <input type="range" value="80" aria-label="Volume CrownHim-${t.name}">
        <div class="bt">${icon("speaker", 7)}<button class="ms">M</button><button class="ms s">S</button>${icon("route", 9)}<span>Route</span>${icon("phase", 7)}${icon("trim", 10)}<span>trim</span></div>
      </div>
      <div class="tn ${t.selected ? "hot" : ""}" style=${styleMap({ color: t.ink })}>CrownHim-${t.strip ? html`\\${t.strip}` : t.name}</div>
      <div class="nn" style=${styleMap({ background: t.num })}>${i + 1}</div>
    </div>`;
  }

  render() {
    const marks = Array.from({ length: 11 }, (_, k) => [`${k * 8 + 1}.1.00`, `${Math.floor((k * 16) / 60)}:${String((k * 16) % 60).padStart(2, "0")}.00`]);
    const tools = ["newFile", "openUp", "saveDown", "info", "undo", "redo", "metro", "xfade", "link", "grid9", "env", "gridLines", "snap", "lock"];
    const on = new Set(["xfade", "link", "env", "gridLines", "snap"]);
    const sc = ["12", "6", "0", "-6", "-12", "-18", "-24", "-30", "-36", "-42"];
    return html`
      <header class="head">
        <div>${icon("reaper", 8)}<span class="name">CrownHim [modified] - REAPER v6.12c/x64 - EVALUATION LICENSE</span><span class="grow"></span><span class="ctl">${icon("min", 6)}${icon("restore", 6)}${icon("close", 6)}</span></div>
        <div class="menu">${["File", "Edit", "View", "Insert", "Item", "Track", "Options", "Actions", "Help", "[Load track icon]"].map((m) => html`<button>${m}</button>`)}<span class="grow"></span><span class="audio">[44.1kHz 24bit WAV : 2/2ch 1024spls ~43/187ms WaveOut]</span></div>
      </header>
      <div class="top">
        <div class="tools">${tools.map((t) => html`<button class=${on.has(t) ? "on" : ""} aria-label=${t}>${icon(t, 11)}</button>`)}</div>
        <div class="time"><div class="band"></div><div class="ruler">${marks.map(([a, b]) => html`<div class="mark"><span>${a}</span><span>${b}</span>
          <svg width="75" height="4" aria-hidden="true"><path d=${Array.from({ length: 16 }, (_, k) => `M${(k * 75) / 16} ${k % 2 ? 2 : 0}V4`).join("")} stroke="#777"/></svg></div>`)}</div></div>
      </div>
      <div class="mid">
        <div class="tcp">${tracks.map((t, i) => html`<div class="trk">
          <span class="no" style=${styleMap({ background: t.num })}>${i + 1}</span>
          <div class="panel" style=${styleMap({ background: t.color })}>
            <div class="pill"><button class="rec" aria-label="Record arm"></button><span class="nm" style=${styleMap({ color: t.ink })}>CrownHim-${t.name}</span><span class="knob"></span></div>
            ${t.selected ? html`<div class="vals"><span>0.00dB</span><span>center</span></div>` : nothing}
          </div>
          <div class="side"><button class="ms">M</button><button class="ms s">S</button>${t.pic ? html`<span class="pic ${t.selected ? "sel" : ""}">${icon(t.pic, 20)}</span>` : nothing}</div>
        </div>`)}</div>
        <div class="arr">${tracks.map((t, i) => html`<div class="lane"><span class="wav">${t.wav ?? nothing}</span>
          <span class="clip" style=${styleMap({ background: t.item })}><svg viewBox="0 0 798 17" preserveAspectRatio="none" aria-hidden="true">
            <path d="M0 5H798M0 12H798" stroke="#000" stroke-width=".7" opacity=".4"/><path d=${wave(t, i + 1)} stroke="#22281c" stroke-width=".8" opacity=".6"/></svg></span>
          ${this.gridSvg()}</div>`)}</div>
        <div class="vs"><span></span><span class="dot"></span><span class="th"></span><span class="dot"></span>${icon("plus", 5)}${icon("min", 5)}</div>
      </div>
      <div class="low">${this.gridSvg()}</div>
      <div class="hs"><span class="lab">CrownHim-Bass [Items] 1</span><span class="th"></span><span class="grow"></span><span class="dot"></span>${icon("plus", 5)}${icon("min", 5)}</div>
      <div class="trans">
        <button class="tb" aria-label="Go to start">${icon("prev", 7)}</button><button class="tb" aria-label="Go to end">${icon("next", 7)}</button><button class="tb r" aria-label="Record"></button><button class="tb p" aria-label="Play">${icon("play", 7)}</button><button class="tb" aria-label="Repeat">${icon("loop", 8)}</button><button class="tb" aria-label="Stop">${icon("stop", 7)}</button><button class="tb" aria-label="Pause">${icon("pause", 7)}</button>
        <span class="state">[Stopped]</span><span class="grow"></span>
        <span class="sel"><span>Selection:</span><span>2.3.00</span><span>3.1.00</span><span>0.2.00</span></span>
        <span class="box"><span>BPM</span><span>120</span></span><span class="box sm">4/4</span><span class="box"><span>GLOBAL</span><span>none</span></span><span class="dial"></span><span class="rate">Rate:<br>1.0</span>
      </div>
      <div class="mixer">
        <div class="strip master">
          <div><div class="slots"></div></div>
          <div class="io"><div class="rule"></div><b>Left Output / Right Ou</b></div>
          <div class="fx"><span>FX</span><em>${icon("power", 5)}</em></div>
          <div class="hd"><span class="knob"></span>${icon("mono", 9)}</div>
          <div class="fd">
            <div class="c"><span class="inf">-inf</span>${sc.map((s) => html`<span>${s}-</span>`)}</div>
            <div class="c m"><span class="db">0.00dB</span>${[6, 18, 30, 42, 54].map((s) => html`<span>-${s}-</span>`)}</div>
            <div class="c"><span class="inf">-inf</span>${sc.map((s) => html`<span>${s}</span>`)}</div>
            <input type="range" value="84" aria-label="Master volume">
            <div class="bt"><button class="ms">M</button><button class="ms s">S</button>${icon("routeM", 10)}<span>Route</span><span></span><span></span><span></span><span></span>${icon("trim", 10)}<span>trim</span></div>
          </div>
          <div class="tn"><span>-inf</span><span>-inf</span></div>
          <div class="nn">${icon("info", 8)}<span>MASTER</span></div>
        </div>
        ${tracks.map((t, i) => this.strip(t, i))}
      </div>
      <div class="tabrow"><button>${icon("outline", 5)}Mixer</button></div>
      <task-bar tray></task-bar>
      ${this.ctxMenu()}`;
  }
}

/* ---------- third screen: browser with document ---------- */
@customElement("docs-screen")
class DocsScreen extends LitElement {
  static styles = [base, css`
    :host { position: relative; background: #f8f9fa; border-left: 1px solid #10131c; }
    .tabs { display: flex; height: 17px; background: #20203f; color: #ccc; align-items: center; }
    .tab { width: 116px; height: 17px; display: flex; align-items: center; gap: 3px; padding: 0 5px; border-right: 1px solid #55556b; white-space: nowrap; }
    .tab span { flex: 1; overflow: hidden; mask-image: linear-gradient(90deg, #000 88%, transparent); }
    .tab.on { background: #f9f9fa; color: #555; border-top: 1px solid #0a84ff; }
    .tabs > .i { margin-left: 5px; color: #fff; }
    .ctl { display: flex; gap: 17px; padding-right: 9px; color: #999; }
    .nav { display: flex; height: 21px; background: #f9f9fa; border-bottom: 1px solid #dedee0; align-items: center; padding: 0 6px 0 1px; gap: 9px; color: #444; }
    .back { width: 17px; height: 17px; border: 1px solid #ccc; border-radius: 9px; display: grid; place-items: center; color: #777; margin-right: -4px; }
    .nav > .i-right { color: #999; }
    .url { flex: 0 0 495px; margin-left: 50px; height: 16px; border: 1px solid #bcbcbe; background: #fff; display: flex; align-items: center; gap: 5px; padding: 0 4px; }
    .url input { flex: 1; font: 7px "Open Sans", sans-serif; color: #777; }
    .srch { flex: 0 0 194px; margin-left: -4px; height: 16px; border: 1px solid #bcbcbe; background: #fff; display: flex; align-items: center; gap: 3px; padding: 0 4px; color: #666; }
    .srch input { font-size: 7px; width: 150px; }
    .head { display: flex; background: #fff; height: 33px; align-items: center; padding: 0 11px; border-bottom: 1px solid #e2e3e6; gap: 11px; }
    .logo { width: 14px; height: 19px; }
    .tt { display: flex; align-items: center; gap: 8px; font: 9px/11px Roboto, sans-serif; color: #333; }
    .tt .i { color: #666; }
    .tt span { margin-right: 3px; }
    .mn { display: flex; gap: 8px; font: 7px/9px Roboto, sans-serif; color: #333; margin-top: 3px; }
    .mn a { color: #777; text-decoration: underline; margin-left: 3px; }
    .head .i-comment { color: #555b60; }
    .share { background: #1a73e8; color: #fff; width: 45px; height: 18px; border-radius: 2px; display: flex; align-items: center; justify-content: center; gap: 4px; font: 700 7px Roboto, sans-serif; }
    .tb { display: flex; height: 20px; background: #fff; align-items: center; padding: 0 6px 0 11px; color: #444; border-bottom: 1px solid #dadce0; }
    .tb button { width: 14px; height: 13px; display: grid; place-items: center; flex: none; }
    .tb button.n { width: 9px; }
    .tb button.on { background: #e8f0fe; color: #1a73e8; }
    .tb i { width: 1px; height: 10px; background: #dadce0; margin: 0 3px; flex: none; }
    .dd { display: flex; align-items: center; width: 32px; padding: 0 4px 0 5px; flex: none; }
    .dd select { appearance: none; flex: 1; width: 10px; font: 6px Roboto, sans-serif; }
    .dd.w { width: 53px; }
    .hr { height: 8px; background: #e8eaed; display: flex; justify-content: center; padding-right: 21px; line-height: 8px; }
    .hr div { display: flex; width: 408px; background: #fff; border: solid #f1f3f4; border-width: 0 50px 0 49px; position: relative; }
    .hr svg { position: absolute; left: -49px; top: 0; }
    .canvas { display: flex; position: relative; }
    .vr { width: 8px; background: #fff; border-right: 1px solid #e0e2e5; position: relative; overflow: hidden; }
    .vr .off { height: 57px; background: #e8eaed; }
    .vr svg { position: absolute; left: 0; top: 0; }
    .outl { color: #777; padding: 15px 0 0 9px; }
    .mid { flex: 1; display: flex; justify-content: center; padding: 8px 38px 0 0; }
    .page { width: 409px; background: #fff; border: 1px solid #e4e5e8; border-bottom: 0; padding: 62px 48px 66px; font: 7px/10px "Liberation Sans", Arial, sans-serif; color: #222; }
    .page h1 { font: 14px/16px "Liberation Sans", sans-serif; margin: 0 0 30px; color: #000; }
    .page h2 { font: 11px/13px "Liberation Sans", sans-serif; margin: 0 0 15px; color: #000; }
    .page p { margin: 0 0 11px; white-space: nowrap; }
    .page code { font: 7px/10px "Liberation Mono", monospace; }
    .vb { width: 8px; background: #f1f1f1; display: flex; flex-direction: column; align-items: center; padding: 2px 0; gap: 2px; color: #555; }
    .vb span { width: 7px; flex: 0 0 400px; background: #c1c1c1; }
    .vb div { flex: 1; }
    .ex { position: absolute; right: 32px; bottom: 5px; width: 20px; height: 19px; background: #fff; border: 1px solid #dcdee1; display: grid; place-items: center; color: #555; }
    .sp { position: absolute; right: 0; bottom: 17px; width: 12px; height: 21px; background: #fff; border-radius: 11px 0 0 11px; box-shadow: 0 0 2px #888; display: grid; place-items: center; }
  `];

  private ruler() {
    const labels = Array.from({ length: 21 }, (_, k) => k - 2).filter((n) => n !== 0);
    return html`<svg width="408" height="8" aria-hidden="true">
      <path d=${Array.from({ length: 42 }, (_, k) => `M${(k * 39) / 4} ${k % 2 ? 3 : 2}V${k % 2 ? 5 : 6}`).join("")} stroke="#b5b8bb" stroke-width=".7"/>
      ${labels.map((n) => svg`<text x=${48.5 + n * 19.5} y="6" font-size="5" text-anchor="middle" fill="#555" stroke="#fff" stroke-width="2" paint-order="stroke">${Math.abs(n)}</text>`)}
      <path d="M46 2h6v3l-3 3-3-3zM355 3h6l-3 4z" fill="#4285f4"/></svg>`;
  }

  private vruler() {
    const ns = Array.from({ length: 25 }, (_, k) => k - 2).filter((n) => n !== 0);
    return html`<div class="vr"><div class="off"></div><svg width="8" height="500" aria-hidden="true">
      <path d=${Array.from({ length: 50 }, (_, k) => `M2 ${8 + (k * 39) / 4}h3`).join("")} stroke="#b5b8bb" stroke-width=".7"/>
      ${ns.map((n) => svg`<text transform="translate(6 ${57 + n * 19.5}) rotate(-90)" font-size="5" text-anchor="middle" fill="#555">${Math.abs(n)}</text>`)}</svg></div>`;
  }

  render() {
    const tabs: [string, string][] = [["gmail", "Inbox - clarkthomas4@gmail.com"], ["drv", "StudioLite - Google Drive"], ["gdoc", "Studio Teaching Plan - Google Docs"], ["gdoc", "Sound Production: Setup Guide"], ["gdoc", "Sound Production: Session 1 - Google"], ["reaper", "Adjust all track heights at once"]];
    const b = (...n: string[]) => n.map((x) => html`<button aria-label=${x} class="${x === "alL" ? "on" : ""}${x === "caret" ? "n" : ""}">${icon(x, x === "caret" ? 5 : 9)}</button>`);
    const dd = (label: string, v: string, w = "") => html`<label class="dd ${w}"><select aria-label=${label}><option>${v}</option></select>${icon("caret", 5)}</label>`;
    const c = (t: string) => html`<code>${t}</code>`;
    return html`
      <div class="tabs">${tabs.map(([i, t], k) => html`<div class="tab ${k === 4 ? "on" : ""}">${icon(i, 8)}<span>${t}</span>${icon("close", 6)}</div>`)}${icon("plus", 8)}<span class="grow"></span><span class="ctl">${icon("min", 6)}${icon("restore", 6)}${icon("close", 6)}</span></div>
      <div class="nav">
        <button class="back" aria-label="Back">${icon("left", 9)}</button>${icon("right", 9)}${icon("refresh", 8)}${icon("home", 8)}
        <label class="url">${icon("shield", 8)}${icon("lock", 7)}${icon("toggles", 8)}<input aria-label="Address" value="https://docs.google.com/document/d/1p-A3PbDlSda3snKmgi7USXxMuIXpiluT_9bYcKyEB3s/edit#">${icon("dots", 8)}${icon("pocket", 8)}${icon("starO", 8)}</label>
        <label class="srch">${icon("searchL", 8)}<input placeholder="Search" aria-label="Search"></label>
        <span class="grow"></span>${icon("library", 8)}${icon("abp", 8)}${icon("sidebar", 8)}${icon("account", 8)}${icon("lastpass", 8)}${icon("burger", 8)}
      </div>
      <header class="head">
        <svg class="logo" viewBox="0 0 14 19" aria-hidden="true"><path d="M1 0h8l5 5v13a1 1 0 0 1-1 1H1a1 1 0 0 1-1-1V1a1 1 0 0 1 1-1z" fill="#4285f4"/><path d="M9 0l5 5H9z" fill="#a1c2fa"/><path d="M3 9h8M3 11h8M3 13h8M3 15h5" stroke="#fff"/></svg>
        <div><div class="tt"><span>Sound Production: Session 1</span>${icon("starO", 8)}${icon("move", 8)}${icon("cloudOk", 9)}</div>
        <div class="mn">${["File", "Edit", "View", "Insert", "Format", "Tools", "Add-ons", "Help"].map((m) => html`<button>${m}</button>`)}<a href="#">Last edit was seconds ago</a></div></div>
        <span class="grow"></span>${icon("comment", 11)}<button class="share">${icon("lock", 6)}Share</button>${icon("person", 15)}
      </header>
      <div class="tb">
        ${b("uturn", "uturnR", "print", "spell", "paint")}<i></i>${dd("Zoom", "100%")}<i></i>${dd("Style", "Normal text", "w")}<i></i>${dd("Font", "Arial", "w")}<i></i>${dd("Size", "11")}
        ${b("bold", "italic", "underline", "colorA", "pen")}<i></i>${b("link", "addCom", "image", "caret")}<i></i>${b("alL", "alC", "alR", "alJ")}<i></i>${b("spacing")}<i></i>${b("ol", "caret", "ul", "caret", "outdent", "indent")}<i></i>${b("clear")}
        <span class="grow"></span>${icon("pencil", 8)}<label class="dd w"><select aria-label="Mode"><option>Editing</option></select>${icon("caret", 5)}</label><i></i>${icon("chevUp", 6)}
      </div>
      <div class="hr"><div>${this.ruler()}</div></div>
      <div class="canvas">
        ${this.vruler()}
        <div class="outl">${icon("outline", 10)}</div>
        <div class="mid"><article class="page">
          <h1>Sound Production: Session 1</h1>
          <h2>Setting up a session</h2>
          <p>In the previous example, the project you opened was already set up and ready to go. Now<br>you will set up a project from scratch with the recordings provided.</p>
          <p>The song we shall mix this time is Glorious Christ. The band is the same (except for a<br>change of singer) and you will find 8 tracks in the Projects folder.</p>
          <p>Start by opening a new project in Reaper “${c("File - New Project”")} or “${c("Ctrl - N")}”.<br>With a blank project open, you can select the tracks in the projects folder and drag and drop<br>them into Reaper. Select the option to import them to separate tracks if asked.</p>
          <p>At this point it is a good idea to save the project so press “${c("Ctrl - S")}”, navigate to the<br>Projects folder, give your project a name and check that the boxes for “Create subdirectory<br>for project” and “Move all media into project directory” are ticked.<br>From this point on you can keep typing “${c("Ctrl - S")}”, as you progress to ensure that the<br>saved version is kept up to date.</p>
          <p>The next few steps are to lay out the project in a clear and helpful way before we start mixing.<br>This is optional but I find it helpful so that I can always find the track I want easily.</p>
          <p>First, I want to make all the tracks appear smaller in the timeline view so that I can see them<br>all at once. To do this, you can bring my mouse over one of the tracks to the left, hold “${c("Ctrl”")}<br>and scroll down with the mousewheel. Alternatively you can place the mouse at the bottom of<br>each track and click and drag to set the height for that track.</p>
          <p>Next I rename the tracks if needed. In this case it is helpful to remove the “GloriousChrist-”<br>from the start of each track name so that you can more easily see what each track is. To edit<br>this, double click on the track name.</p>
        </article></div>
        <div class="vb">${icon("chevUp", 5)}<span></span><div></div>${icon("chevDown", 5)}</div>
        <button class="ex" aria-label="Explore">${icon("explore", 10)}</button>
        <button class="sp" aria-label="Show side panel">${icon("chevLeft", 6)}</button>
      </div>
      <task-bar></task-bar>`;
  }
}

@customElement("app-root")
class AppRoot extends LitElement {
  static styles = css`
    :host { display: grid; grid-template-columns: 526fr 986fr 988fr; align-items: start; min-height: 100vh; background: #000; }
    :host > * { min-width: 0; }
  `;
  render() {
    return html`<explorer-screen></explorer-screen><reaper-screen></reaper-screen><docs-screen></docs-screen>`;
  }
}
